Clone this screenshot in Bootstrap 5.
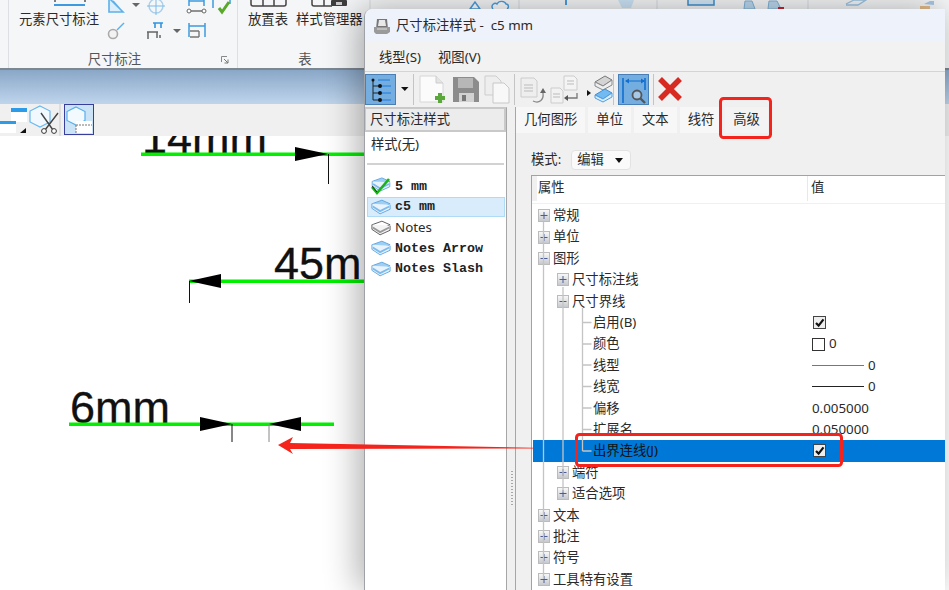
<!DOCTYPE html>
<html lang="zh">
<head>
<meta charset="utf-8">
<title>尺寸标注样式</title>
<link href="https://cdn.jsdelivr.net/npm/bootstrap@5.3.0/dist/css/bootstrap.min.css" rel="stylesheet">
<style>
html,body{height:100%;overflow:hidden;background:#fff}
body{font-family:"Noto Sans","Noto Sans CJK SC",sans-serif;font-size:13.33px;line-height:1;color:#2a2a2a}
svg{display:block;flex:none}
.stage{position:relative;width:949px;height:590px;overflow:hidden}
.rib{height:70px;background:#f5f6f7;border-bottom:2px solid #7d8791}
.rib-gap{width:9px;border-right:1px solid #dcdfe3}
.rib-g1{width:229px;border-right:1px solid #dcdfe3}
.rib-g2{width:130px}
.rib-body{height:49px}
.rib-big{width:91px;padding-left:10px;white-space:nowrap}
.rib-lab{height:19px;color:#555;padding-top:4px}
.rib-lab1{padding-right:17px}
.rib-ex{position:absolute;right:8px;top:7px}
.rib-foot{position:relative}
.rib-t{white-space:nowrap}
.rib-t1{width:48px;padding-left:10px}
.rib-t2{padding-left:10px}
.blueband{height:34px;background:linear-gradient(#8aa7c8,#bfd5ec)}
.strip{height:32px;background:#f0f0f0}
.cad{height:454px}
.dlg{position:absolute;left:364px;top:9px;width:581px;height:581px;background:#f0f0f0;border-left:1px solid #9ea2a6;border-top-left-radius:8px;box-shadow:-6px 0 34px rgba(0,0,0,.32);overflow:hidden}
.dlg-title{height:33px;background:#eef2fb;padding-left:8px;gap:5px}
.dlg-menu{height:30px;gap:17px;padding:2px 0 0 14px;border-bottom:1px solid #d4d4d4;background:#f2f2f2}
.dlg-tools{height:35px;padding:2px 0 0 0;background:#f0f0f0}
.tb-btn{width:31px;height:31px;background:#74ade0;border:1px solid #4a7fb5;display:flex;align-items:center;justify-content:center}
.tb-sep{width:1px;height:31px;background:#c4c4c4}
.pane{width:142px;background:#fff;border-right:1px solid #a6a6a6;border-top:1px solid #c8c8c8}
.pane-head{height:24px;padding:0 4px;background:#ececec;border:1px solid #c9c9c9;border-bottom-width:2px;border-right-width:2px;display:flex;align-items:center}
.pane-none{padding:6px 6px 0;height:31px}
.pane-rule{height:2px;background:#d2d2d2;margin:0 2px 11px 2px}
.sty{height:20.7px;margin:0 1px 0 2px;padding-left:3px;gap:4px;border:1px solid transparent}
.sty.is-on{background:#d9ecfb;border-color:#aedcf7}
.sty-b{font-family:"Liberation Mono",monospace;font-weight:700;font-size:13.33px;color:#222;white-space:pre}
.split{width:8px;position:relative}
.dots{position:absolute;left:4px;top:364px;width:2px;height:36px;background:repeating-linear-gradient(#a8a8a8 0 1px,transparent 1px 3px)}
.right{border-left:1px solid #a6a6a6;min-width:0}
.tabbar{height:27px;margin:0;padding:0;border:0;flex-wrap:nowrap;gap:3px;align-items:flex-start;background:#f0f0f0}
.tabbar .nav-link{color:#2a2a2a;height:26px;padding:0 8px;display:flex;align-items:center;background:#f7f7f7;border:0;border-radius:0}
.tabbar .nav-link.active{background:#f3f3f3;color:#2a2a2a}
.mode{padding:16px 0 5px 15px;gap:10px;height:41px}
.modebtn{width:60px;height:20px;padding:0 0 0 5px;font-size:13.33px;line-height:1;background:#fafafa;border:1px solid #e2e2e2;border-radius:4px;color:#2a2a2a;text-align:left;display:flex;align-items:center;justify-content:space-between}
.modebtn.dropdown-toggle::after{margin:0 7px 0 0;border-top-color:#111;border-width:5px 4.5px 0 4.5px}
.tree{margin-left:15px;width:414px;flex:1;background:#fff;border-top:1px solid #9ba3ad;border-left:1px solid #9ba3ad;position:relative;overflow:hidden}
.tree-head{height:28px;display:flex;align-items:center;background:#fff;border-bottom:1px solid #eef0f2;padding-bottom:3px}
.th-a{width:276px;height:25px;padding-left:1px;border-left:5px solid #f0f0f0;display:flex;align-items:center;border-right:1px solid #e6e8eb;box-sizing:border-box}
.th-b{padding-left:3px}
.rows{padding-top:1px}
.trow{height:21.4px;display:flex;align-items:center;margin-left:1px}
.trow.is-sel{background:#0078d7;color:#111}
.tn{width:279px;display:flex;align-items:center;white-space:nowrap}
.tn.l0{padding-left:5px}.tn.l1{padding-left:24px}.tn.l2{padding-left:60px}
.tn .pm{margin-right:3px}
.tv{display:flex;align-items:center;gap:4px;white-space:nowrap}
.tv.ck{padding-left:1px}
.lines{position:absolute;left:0;top:28px;pointer-events:none}
.marks{position:absolute;left:0;top:0;pointer-events:none}
.ml7{margin-left:7px}
</style>
</head>
<body>
<svg width="0" height="0" class="position-absolute">
<defs>
<linearGradient id="gb" x1="0" y1="0" x2="0" y2="1"><stop offset="0" stop-color="#fafafa"/><stop offset="1" stop-color="#c4c7cc"/></linearGradient>
<symbol id="plus" viewBox="0 0 12 13"><rect x=".5" y=".5" width="11" height="12" fill="url(#gb)" stroke="#bbb"/><path d="M2.500 6.500h7M6 3v7" stroke="#4a5d96" fill="none"/></symbol>
<symbol id="minus" viewBox="0 0 12 13"><rect x=".5" y=".5" width="11" height="12" fill="url(#gb)" stroke="#bbb"/><path d="M2.500 6.500h7" stroke="#4a5d96" fill="none"/></symbol>
<symbol id="book" viewBox="0 0 22 17"><path d="M1 5 12 1l9 4-11 5z" fill="#9fcef4" stroke="#5aa3e0"/><path d="M1 5v5l9 6 11-5V6" fill="#e8f3fc" stroke="#5aa3e0"/><path d="M2 8l8 5 10-5" fill="none" stroke="#7dbbec" stroke-width="2"/></symbol>
<symbol id="bookg" viewBox="0 0 22 17"><path d="M1 5 12 1l9 4-11 5z" fill="#fff" stroke="#555"/><path d="M1 5v5l9 6 11-5V6" fill="#f4f4f4" stroke="#555"/><path d="M2 8l8 5 10-5" fill="none" stroke="#999" stroke-width="2"/></symbol>
<symbol id="cb" viewBox="0 0 13 13"><rect x=".5" y=".5" width="12" height="12" fill="#eee" stroke="#444"/><path d="M3 7l2.600 2.600L10.500 3.400" fill="none" stroke="#111" stroke-width="2.200"/></symbol>
</defs>
</svg>
<div class="stage">
  <header class="rib d-flex">
    <div class="rib-gap"></div>
    <section class="rib-g1 d-flex flex-column">
      <div class="rib-body d-flex">
        <div class="rib-big">
          <svg width="81" height="13" viewBox="0 0 81 13"><path d="M36 0v2M66 0v2" stroke="#555" stroke-width="1.500"/><path d="M35 5h31" stroke="#3d9ae0" stroke-width="2"/></svg>
          <span>元素尺寸标注</span>
        </div>
        <svg width="137" height="48" viewBox="0 0 137 48">
          <path d="M9-2V12h14L9-2z M13 1l8 9" fill="#dceefb" stroke="#5db0e8" stroke-width="1.600"/>
          <path d="M32 3h8l-4 4z" fill="#666"/>
          <circle cx="56" cy="6" r="7" fill="none" stroke="#a9cfec" stroke-width="1.400"/>
          <path d="M56-3V15M47 6H65" stroke="#7dbbe8"/>
          <path d="M89 0v6M104 0v6M89 1h15" stroke="#3d9ae0" stroke-width="1.500"/>
          <path d="M90 11h14" stroke="#666" stroke-width="1.400"/><circle cx="89" cy="11" r="2" fill="#fff" stroke="#666"/><circle cx="104" cy="11" r="2" fill="#fff" stroke="#666"/>
          <path d="M113 0v8M130 0v4" stroke="#3d9ae0" stroke-width="1.500"/>
          <path d="M119 8l3 4 7-10" fill="none" stroke="#58a82a" stroke-width="3"/>
          <circle cx="13" cy="34" r="4.500" fill="#f2f2f2" stroke="#aaa" stroke-width="1.600"/>
          <path d="M17 30l7-7" stroke="#5db0e8" stroke-width="1.400"/>
          <path d="M53 23h10M55 23v5M61 23v5" stroke="#2f95e0" stroke-width="1.600"/>
          <path d="M47 32h11M48 32v7M57 32v6M60 35v3" stroke="#666" stroke-width="1.500"/>
          <path d="M73 29h8l-4 4z" fill="#666"/>
          <path d="M89 23v14M105 23v14M89 26h16" stroke="#3d9ae0" stroke-width="1.500"/>
          <path d="M90 31h9M90 37h9M99 31v6" stroke="#777" stroke-width="1.400"/>
        </svg>
      </div>
      <div class="rib-lab rib-lab1 rib-foot d-flex justify-content-center">
        <span>尺寸标注</span>
        <svg class="rib-ex" width="8" height="8" viewBox="0 0 8 8"><path d="M.5 6V.5H6" fill="none" stroke="#888"/><path d="M3 3l4 4M7 3.500V7H3.500" fill="none" stroke="#777"/></svg>
      </div>
    </section>
    <section class="rib-g2 d-flex flex-column">
      <div class="rib-body d-flex">
        <div class="rib-t rib-t1">
          <svg width="40" height="13" viewBox="0 0 40 13"><path d="M3-2v6q0 2 2 2h31q2 0 2-2v-6M15-2v8M26-2v8" fill="none" stroke="#444" stroke-width="1.500"/></svg>
          <span>放置表</span>
        </div>
        <div class="rib-t rib-t2">
          <svg width="66" height="13" viewBox="0 0 66 13"><path d="M16-2v6q0 2 2 2h18M28-2v8" fill="none" stroke="#444" stroke-width="1.500"/><rect x="35" y="0" width="16" height="6" rx="1" fill="#3e3e3e"/><rect x="40" y="2" width="6" height="3" fill="#ccc"/></svg>
          <span>样式管理器</span>
        </div>
      </div>
      <div class="rib-lab text-center"><span class="ps-1">表</span></div>
    </section>
    <svg width="581" height="9" viewBox="368 0 581 9">
      <path d="M370 0v9M519 0v9M657 0v9M808 0v9" stroke="#d8dbdf"/>
      <path d="M470 9l5-7 5 7z" fill="#fff" stroke="#4a9fe0" stroke-width="1.500"/>
      <path d="M493 9c-3-4 2-7 4-5 2-4 8-3 9 0 3 0 3 4 1 5" fill="#fff" stroke="#4a9fe0" stroke-width="1.400"/>
      <path d="M566 0v5" stroke="#4a9fe0" stroke-width="2"/>
      <path d="M618 0h16l-3 8h-9z" fill="#cde6f8"/>
      <rect x="688" y="-3" width="26" height="8" fill="#d5e8f7" stroke="#3d8fd0" stroke-width="1.500"/>
      <path d="M744 9l1-8h7l3 8z" fill="#bcd9ef" stroke="#7fb2d8"/>
      <path d="M768 9l1-8h8l4 8z" fill="#bcd9ef" stroke="#7fb2d8"/><rect x="778" y="7" width="6" height="2" fill="#c23"/>
      <path d="M846 4l8-4h12l-8 5h-12" fill="none" stroke="#9cc5e4" stroke-width="1.300"/>
      <rect x="920" y="6" width="10" height="3" fill="#e4bc8b"/><path d="M924 4l6-3h4v4z" fill="#a9c8e4"/>
    </svg>
  </header>
  <div class="blueband"></div>
  <div class="strip">
    <svg width="100" height="32" viewBox="0 104 100 32">
      <rect x="11" y="108" width="16" height="14" fill="#fff"/><rect x="11" y="108" width="16" height="4" fill="#2d9be8"/>
      <rect x="0" y="121" width="16" height="12" fill="#fff"/><rect x="0" y="121" width="16" height="3" fill="#2d9be8"/>
      <path d="M20 133l6-5v5z" fill="#111"/>
      <path d="M40 106l10 5v11l-10 5-10-5v-11z" fill="#f2f9fe" stroke="#6ab7ee" stroke-width="1.200"/>
      <path d="M41 113l12 17M58 113l-13 17" stroke="#444" stroke-width="1.400"/>
      <circle cx="44" cy="131" r="2.400" fill="#fff" stroke="#333"/><circle cx="54" cy="131" r="2.400" fill="#fff" stroke="#333"/>
      <path d="M60 104v32" stroke="#ccc"/>
      <rect x="64.500" y="104.500" width="29" height="30" fill="#cbe3f6" stroke="#383e9e"/>
      <path d="M76 107l9 4.500v9l-9 4.500-9-4.500v-9z" fill="#f3fafe" stroke="#57afee" stroke-width="1.200"/>
      <path d="M76 121v12h16v-12z" fill="#fff"/><path d="M76 125h16M76 125v9" stroke="#777" stroke-dasharray="2 1"/>
    </svg>
  </div>
  <main class="cad">
    <svg width="949" height="454" viewBox="0 136 949 454">
      <g font-family="Liberation Sans, sans-serif" font-size="45" fill="#111" stroke="#111" stroke-width=".3">
        <text x="142" y="153">14mm</text>
        <text x="274" y="279">45m</text>
        <text x="70" y="423">6mm</text>
      </g>
      <g fill="#00f000">
        <rect x="141" y="152.500" width="224" height="3.500"/>
        <rect x="189" y="279.500" width="176" height="3.500"/>
        <rect x="69" y="422.500" width="265" height="3.500"/>
      </g>
      <path d="M295 147l33 7-33 7zM221 274l-32 7 32 7zM200 417l32 7-32 7zM301 417l-32 7 32 7z" fill="#000"/>
      <path d="M328.500 154v30M189.500 281v22M232 424v18" stroke="#111"/>
      <path d="M269 424v18" stroke="#888"/>
    </svg>
  </main>

  <div class="dlg d-flex flex-column">
    <div class="dlg-title d-flex align-items-center">
      <svg width="18" height="18" viewBox="0 0 18 18"><path d="M4 2h10l1 10H3z" fill="#777"/><path d="M6 3h6l1 6H5z" fill="#e8e8e8"/><path d="M1 10h16v5l-3 2H3l-2-2z" fill="#9a9a9a"/><path d="M4 12h10" stroke="#e0e0e0"/></svg>
      <span>尺寸标注样式 -&nbsp; c5 mm</span>
    </div>
    <div class="dlg-menu d-flex align-items-center">
      <span>线型(S)</span>
      <span>视图(V)</span>
    </div>
    <div class="dlg-tools d-flex">
      <div class="tb-btn">
        <svg width="22" height="24" viewBox="0 0 22 24"><path d="M3 2V22M3 8h7M3 15h7M3 22h7" stroke="#222" fill="none"/><path d="M8 2h12M12 8h9M12 15h9M12 22h9" stroke="#1a7be0" fill="none"/><circle cx="3" cy="2" r="1.500" fill="#111"/><circle cx="10" cy="8" r="2" fill="#111"/><circle cx="10" cy="15" r="2" fill="#111"/><circle cx="10" cy="22" r="2" fill="#111"/></svg>
      </div>
      <svg class="ms-1" width="9" height="31" viewBox="0 0 9 31"><path d="M1 13h7.500l-3.700 4z" fill="#111"/></svg>
      <div class="tb-sep ms-1"></div>
      <svg class="ms-1" width="30" height="31" viewBox="0 0 30 31"><path d="M2 2h16l7 7v19H2z" fill="#fbfbfb" stroke="#d6d6d6"/><path d="M18 2v7h7" fill="#e4e4e4" stroke="#ccc"/><path d="M17 24h10M22 19v10" stroke="#5aa83c" stroke-width="4"/></svg>
      <svg class="ms-1" width="28" height="31" viewBox="0 0 28 31"><path d="M1 3h21l5 5v20H1z" fill="#8c8c8c"/><rect x="6" y="4" width="15" height="10" fill="#b7b7b7"/><rect x="7" y="19" width="15" height="9" fill="#d2d2d2"/><rect x="10" y="21" width="4" height="6" fill="#777"/></svg>
      <svg class="ms-1" width="26" height="31" viewBox="0 0 26 31"><path d="M1 2h11l5 5v14H1z" fill="#eee" stroke="#cdcdcd"/><path d="M9 9h11l5 5v15H9z" fill="#f8f8f8" stroke="#c8c8c8"/></svg>
      <div class="tb-sep ms-1"></div>
      <svg class="ms-1" width="30" height="31" viewBox="0 0 30 31"><path d="M2 4h13l3 3v16H2z" fill="#eee" stroke="#ccc"/><path d="M5 11h9M5 14h9M5 17h9" stroke="#bbb"/><path d="M14 27c6 3 11-1 10-8" fill="none" stroke="#888" stroke-width="1.300"/><path d="M21 19h6l-3-5z" fill="#666"/></svg>
      <svg width="30" height="31" viewBox="0 0 30 31"><path d="M15 2h10l3 3v11H15z" fill="#f4f4f4" stroke="#ccc"/><path d="M2 14h9l3 3v12H2z" fill="#f2f2f2" stroke="#ccc"/><path d="M4 20h7M4 23h7M18 7h7M18 10h7" stroke="#bbb"/><path d="M28 19v5H18" fill="none" stroke="#777" stroke-width="1.300"/><path d="M19 21v6l-4-3z" fill="#555"/></svg>
      <svg class="ml7" width="27" height="31" viewBox="0 0 27 31"><path d="M1 16l4 3-4 3z" fill="#111"/><path d="M9 8l10-6 7 4-9 6z" fill="#d4d4d4" stroke="#777"/><path d="M9 8v4l8 4 9-5V6l-9 6z" fill="#eee" stroke="#888"/><path d="M9 21l10-6 7 4-9 6z" fill="#73baf0" stroke="#3c8fd6"/><path d="M9 21v3l8 4 9-5v-4l-9 6z" fill="#d8ecfb" stroke="#4e9fe0"/></svg>
      <div class="tb-sep"></div>
      <div class="tb-btn ms-1">
        <svg width="26" height="28" viewBox="0 0 26 28"><path d="M2 2V27M24 2v12" stroke="#106fd0" stroke-width="1.600" fill="none"/><path d="M5 5h18" stroke="#106fd0"/><path d="M4 5l4-2.500v5zM24 5l-4-2.500v5z" fill="#106fd0"/><circle cx="16" cy="19" r="4.500" fill="#a8c8e8" stroke="#555" stroke-width="1.800"/><path d="M19.500 22.500l4.500 4.500" stroke="#555" stroke-width="2.400"/></svg>
      </div>
      <div class="tb-sep ms-1"></div>
      <svg class="ms-1" width="24" height="31" viewBox="0 0 24 31"><path d="M2 5l20 20M22 5L2 25" stroke="#d62a22" stroke-width="5.500"/></svg>
    </div>
    <div class="d-flex flex-grow-1 overflow-hidden">
      <aside class="pane">
        <div class="pane-head">尺寸标注样式</div>
        <div class="pane-none">样式(无)</div>
        <div class="pane-rule"></div>
        <div class="sty d-flex align-items-center"><svg width="20" height="18" viewBox="0 0 20 18"><use href="#book" width="20" height="15"/><path d="M1 10l5 6L18 2" fill="none" stroke="#18b318" stroke-width="2.600"/><path d="M1 9l5 6" stroke="#111" stroke-width=".8"/></svg><span class="sty-b">5 mm</span></div>
        <div class="sty is-on d-flex align-items-center"><svg width="20" height="16"><use href="#book"/></svg><span class="sty-b">c5 mm</span></div>
        <div class="sty d-flex align-items-center"><svg width="20" height="16"><use href="#bookg"/></svg><span>Notes</span></div>
        <div class="sty d-flex align-items-center"><svg width="20" height="16"><use href="#book"/></svg><span class="sty-b">Notes Arrow</span></div>
        <div class="sty d-flex align-items-center"><svg width="20" height="16"><use href="#book"/></svg><span class="sty-b">Notes Slash</span></div>
      </aside>
      <div class="split"><div class="dots"></div></div>
      <div class="right flex-grow-1 d-flex flex-column">
        <ul class="nav nav-tabs tabbar">
          <li class="nav-item"><a class="nav-link" href="#">几何图形</a></li>
          <li class="nav-item"><a class="nav-link" href="#">单位</a></li>
          <li class="nav-item"><a class="nav-link" href="#">文本</a></li>
          <li class="nav-item"><a class="nav-link" href="#">线符</a></li>
          <li class="nav-item"><a class="nav-link active" href="#">高级</a></li>
        </ul>
        <div class="mode d-flex align-items-center">
          <span>模式:</span>
          <button class="btn modebtn dropdown-toggle" type="button">编辑</button>
        </div>
        <div class="tree">
          <div class="tree-head"><div class="th-a">属性</div><div class="th-b">值</div></div>
          <div class="rows">
            <div class="trow"><div class="tn l0"><svg class="pm" width="12" height="13"><use href="#plus"/></svg>常规</div></div>
            <div class="trow"><div class="tn l0"><svg class="pm" width="12" height="13"><use href="#plus"/></svg>单位</div></div>
            <div class="trow"><div class="tn l0"><svg class="pm" width="12" height="13"><use href="#minus"/></svg>图形</div></div>
            <div class="trow"><div class="tn l1"><svg class="pm" width="12" height="13"><use href="#plus"/></svg>尺寸标注线</div></div>
            <div class="trow"><div class="tn l1"><svg class="pm" width="12" height="13"><use href="#minus"/></svg>尺寸界线</div></div>
            <div class="trow"><div class="tn l2">启用(B)</div><div class="tv ck"><svg width="13" height="13"><use href="#cb"/></svg></div></div>
            <div class="trow"><div class="tn l2">颜色</div><div class="tv"><svg width="13" height="13" viewBox="0 0 13 13"><rect x=".5" y=".5" width="12" height="12" fill="#fff" stroke="#333"/></svg><span>0</span></div></div>
            <div class="trow"><div class="tn l2">线型</div><div class="tv"><svg width="52" height="3" viewBox="0 0 52 3"><path d="M0 1.500h52" stroke="#777"/></svg><span>0</span></div></div>
            <div class="trow"><div class="tn l2">线宽</div><div class="tv"><svg width="52" height="3" viewBox="0 0 52 3"><path d="M0 1.500h52" stroke="#222"/></svg><span>0</span></div></div>
            <div class="trow"><div class="tn l2">偏移</div><div class="tv">0.005000</div></div>
            <div class="trow"><div class="tn l2">扩展名</div><div class="tv">0.050000</div></div>
            <div class="trow is-sel"><div class="tn l2">出界连线(J)</div><div class="tv ck"><svg width="13" height="13"><use href="#cb"/></svg></div></div>
            <div class="trow"><div class="tn l1"><svg class="pm" width="12" height="13"><use href="#plus"/></svg>端符</div></div>
            <div class="trow"><div class="tn l1"><svg class="pm" width="12" height="13"><use href="#plus"/></svg>适合选项</div></div>
            <div class="trow"><div class="tn l0"><svg class="pm" width="12" height="13"><use href="#plus"/></svg>文本</div></div>
            <div class="trow"><div class="tn l0"><svg class="pm" width="12" height="13"><use href="#plus"/></svg>批注</div></div>
            <div class="trow"><div class="tn l0"><svg class="pm" width="12" height="13"><use href="#plus"/></svg>符号</div></div>
            <div class="trow"><div class="tn l0"><svg class="pm" width="12" height="13"><use href="#plus"/></svg>工具特有设置</div></div>
          </div>
          <svg class="lines" width="414" height="386" viewBox="532 204 414 386">
            <path d="M543.500 222v357M563 287v205M582.500 308v143M582.500 322.500h9M582.500 344h9M582.500 365h9M582.500 386.500h9M582.500 408h9M582.500 429.500h9M582.500 451h9" fill="none" stroke="#c4c4c4" stroke-width="1.300"/>
          </svg>
        </div>
      </div>
    </div>
  </div>

  <svg class="marks" width="949" height="590" viewBox="0 0 949 590">
    <rect x="720.500" y="98.500" width="50" height="39" rx="3" fill="none" stroke="#f4241c" stroke-width="3"/>
    <rect x="576.500" y="434.500" width="265" height="31" rx="3" fill="none" stroke="#f4241c" stroke-width="3"/>
    <path d="M278 445l15-8-3 6L533 447.700v.8L290 449l3 5z" fill="#f4241c"/>
  </svg>
</div>
<script src="https://cdn.jsdelivr.net/npm/bootstrap@5.3.0/dist/js/bootstrap.bundle.min.js"></script>
</body>
</html>
